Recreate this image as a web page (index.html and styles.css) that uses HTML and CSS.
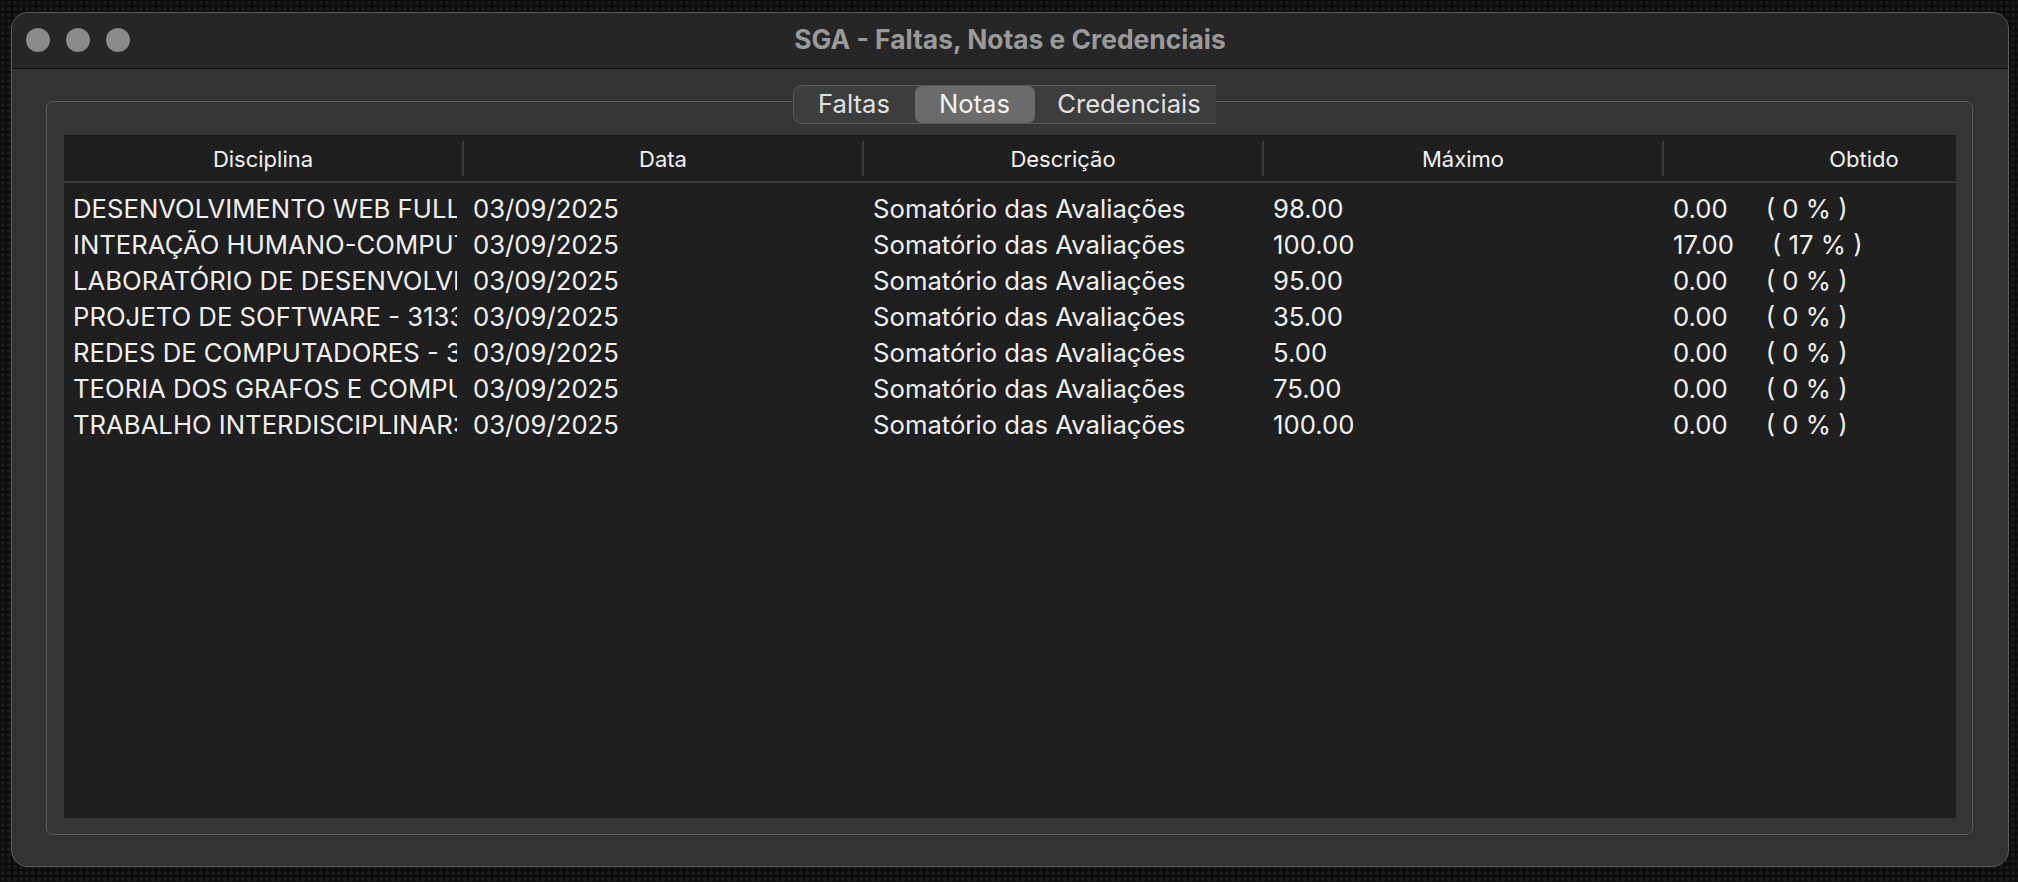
FILE: index.html
```html
<!DOCTYPE html>
<html lang="pt">
<head>
<meta charset="utf-8">
<title>SGA - Faltas, Notas e Credenciais</title>
<link rel="stylesheet" href="styles.css">
</head>
<body>
<div class="window">
  <div class="titlebar">
    <div class="lights">
      <span class="light"></span>
      <span class="light"></span>
      <span class="light"></span>
    </div>
    <div class="title">SGA - Faltas, Notas e Credenciais</div>
    <div class="spacer"></div>
  </div>
  <div class="content">
    <div class="tabs-row">
      <div class="tabs">
        <div class="tab">Faltas</div>
        <div class="tab tab-active">Notas</div>
        <div class="tab tab-last">Credenciais</div>
      </div>
    </div>
    <div class="groupbox">
      <div class="table">
        <div class="thead">
          <div class="th">Disciplina</div>
          <div class="th">Data</div>
          <div class="th">Descrição</div>
          <div class="th">Máximo</div>
          <div class="th">Obtido</div>
        </div>
        <div class="tbody">
          <div class="tr">
            <div class="td">DESENVOLVIMENTO WEB FULL STACK</div>
            <div class="td">03/09/2025</div>
            <div class="td">Somatório das Avaliações</div>
            <div class="td">98.00</div>
            <div class="td">0.00<span class="pct">( 0 % )</span></div>
          </div>
          <div class="tr">
            <div class="td">INTERAÇÃO HUMANO-COMPUTADOR</div>
            <div class="td">03/09/2025</div>
            <div class="td">Somatório das Avaliações</div>
            <div class="td">100.00</div>
            <div class="td">17.00<span class="pct">( 17 % )</span></div>
          </div>
          <div class="tr">
            <div class="td">LABORATÓRIO DE DESENVOLVIMENTO</div>
            <div class="td">03/09/2025</div>
            <div class="td">Somatório das Avaliações</div>
            <div class="td">95.00</div>
            <div class="td">0.00<span class="pct">( 0 % )</span></div>
          </div>
          <div class="tr">
            <div class="td">PROJETO DE SOFTWARE - 3133</div>
            <div class="td">03/09/2025</div>
            <div class="td">Somatório das Avaliações</div>
            <div class="td">35.00</div>
            <div class="td">0.00<span class="pct">( 0 % )</span></div>
          </div>
          <div class="tr">
            <div class="td">REDES DE COMPUTADORES - 3133</div>
            <div class="td">03/09/2025</div>
            <div class="td">Somatório das Avaliações</div>
            <div class="td">5.00</div>
            <div class="td">0.00<span class="pct">( 0 % )</span></div>
          </div>
          <div class="tr">
            <div class="td">TEORIA DOS GRAFOS E COMPUTABILIDADE</div>
            <div class="td">03/09/2025</div>
            <div class="td">Somatório das Avaliações</div>
            <div class="td">75.00</div>
            <div class="td">0.00<span class="pct">( 0 % )</span></div>
          </div>
          <div class="tr">
            <div class="td">TRABALHO INTERDISCIPLINAR: SOFTWARE</div>
            <div class="td">03/09/2025</div>
            <div class="td">Somatório das Avaliações</div>
            <div class="td">100.00</div>
            <div class="td">0.00<span class="pct">( 0 % )</span></div>
          </div>
        </div>
      </div>
    </div>
  </div>
</div>
</body>
</html>
```

FILE: styles.css
```css
html, body {
  margin: 0;
  padding: 0;
  width: 2018px;
  height: 882px;
  overflow: hidden;
}

body {
  background-color: #0b0b0c;
  background-image: radial-gradient(circle at 3px 3px, #1b1b1d 0, #1b1b1d 1.6px, transparent 2.6px);
  background-size: 6px 6px;
  font-family: Inter, "Liberation Sans", sans-serif;
  color: #ededed;
}

.window {
  box-sizing: border-box;
  margin: 12px 9px 0 11px;
  width: 1998px;
  height: 855px;
  border: 1px solid #5e5e5e;
  border-radius: 17px;
  background: #333333;
  overflow: hidden;
  display: flex;
  flex-direction: column;
}

.titlebar {
  box-sizing: border-box;
  height: 56px;
  flex: 0 0 56px;
  background: #262626;
  border-bottom: 1px solid #0a0a0a;
  display: grid;
  grid-template-columns: 1fr auto 1fr;
  align-items: center;
}

.lights {
  display: flex;
  gap: 16px;
  padding-left: 14px;
  padding-bottom: 1px;
}

.light {
  width: 24px;
  height: 24px;
  border-radius: 50%;
  background: #8a8a8a;
}

.title {
  font-weight: 700;
  font-size: 26.4px;
  color: #9a9a9a;
  padding-bottom: 3px;
}

.content {
  flex: 1;
  padding: 16px 35px 0 34px;
  display: flex;
  flex-direction: column;
}

.tabs-row {
  display: flex;
  justify-content: center;
  position: relative;
  z-index: 1;
  height: 39px;
}

.tabs {
  display: flex;
  margin-right: 11px;
  background: #3d3d3d;
  border: 1px solid #5a5a5a;
  border-right: none;
  border-radius: 9px 0 0 9px;
  box-sizing: border-box;
  height: 39px;
}

.tab {
  box-sizing: border-box;
  height: 37px;
  display: flex;
  align-items: center;
  justify-content: center;
  font-size: 25.6px;
  color: #e2e2e2;
  padding: 0 0 2px 0;
}

.tab:first-child {
  width: 121px;
}

.tab-active {
  width: 120px;
  background: #6b6b6b;
  border-radius: 7px;
  color: #f4f4f4;
}

.tab-last {
  width: 181px;
  padding-left: 8px;
}

.groupbox {
  box-sizing: border-box;
  margin-top: -23px;
  height: 734px;
  border: 1px solid #5a5a5a;
  border-radius: 7px;
  background: #363636;
  padding: 33px 16px 16px 17px;
  display: flex;
}

.table {
  flex: 1;
  background: #1f1f1f;
  border-top: 1px solid #181818;
  overflow: hidden;
}

.thead {
  display: flex;
  height: 47px;
  border-bottom: 2px solid #3a3a3a;
  box-sizing: border-box;
}

.th {
  flex: 0 0 400px;
  box-sizing: border-box;
  margin: 5px 0 5px 0;
  border-right: 2px solid #3c3c3c;
  display: flex;
  align-items: center;
  justify-content: center;
  font-size: 22px;
  color: #f2f2f2;
  padding-top: 1px;
}

.th:last-child {
  border-right: none;
}

.tbody {
  padding-top: 8px;
}

.tr {
  display: flex;
  height: 36px;
}

.td {
  flex: 0 0 393px;
  box-sizing: border-box;
  margin-right: 7px;
  padding-left: 9px;
  line-height: 36px;
  font-size: 25.7px;
  color: #f0f0f0;
  white-space: nowrap;
  overflow: hidden;
  text-overflow: clip;
}

.pct {
  margin-left: 38px;
}
```
